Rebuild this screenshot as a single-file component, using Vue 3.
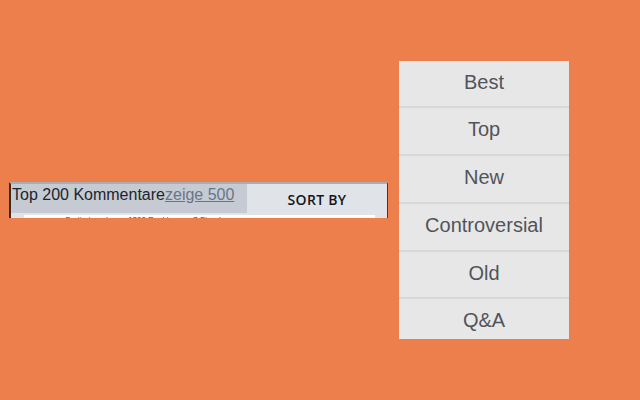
<script setup>
const sortOptions = ['Best', 'Top', 'New', 'Controversial', 'Old', 'Q&A']
</script>

<template>
  <div class="page">
    <div class="comments-bar">
      <div class="bar-head">
        <div class="title-box">
          <span class="title">Top 200 Kommentare</span><a class="show-more">zeige 500</a>
        </div>
        <div class="sort-label">SORT BY</div>
      </div>
      <div class="post-row">
        <p class="post-meta">Sortiert nach: am 1200 Punkten vor 7 Stunden</p>
      </div>
    </div>

    <ul class="sort-menu">
      <li v-for="option in sortOptions" :key="option" class="sort-item">{{ option }}</li>
    </ul>
  </div>
</template>

<style>
html,
body {
  margin: 0;
  background: #ec7f4b;
}
</style>

<style scoped>
.page {
  width: 640px;
  height: 400px;
  overflow: hidden;
  display: flex;
  align-items: center;
  padding-left: 9px;
  gap: 11px;
  box-sizing: border-box;
  background: #ec7f4b;
  font-family: "Liberation Sans", Arial, sans-serif;
}

.comments-bar {
  width: 379px;
  height: 36px;
  box-sizing: border-box;
  overflow: hidden;
  border-left: 2px solid #3a2c25;
  border-right: 1px solid #3a3a3a;
  border-top: 2px solid #a9aeb2;
  background: #e0e3e8;
  flex-shrink: 0;
}

.bar-head {
  display: flex;
  height: 31px;
}

.title-box {
  width: 236px;
  height: 29px;
  box-sizing: border-box;
  padding-left: 1px;
  background: #c6cbd3;
  font-size: 16px;
  line-height: 22px;
  white-space: nowrap;
}

.title {
  color: #20242c;
}

.show-more {
  color: #66768a;
  text-decoration: underline;
}

.sort-label {
  flex: 1;
  text-align: center;
  padding-top: 6px;
  font-family: "Open Sans", sans-serif;
  font-size: 14px;
  font-weight: 600;
  letter-spacing: 0.3px;
  line-height: 19px;
  color: #14161a;
}

.post-row {
  margin: 0 12px 0 13px;
  height: 20px;
  background: #ffffff;
}

.post-meta {
  margin: 0;
  padding: 0 0 0 41px;
  font-size: 8px;
  line-height: 9px;
  color: #333;
}

.sort-menu {
  width: 170px;
  margin: 0;
  padding: 0;
  list-style: none;
  flex-shrink: 0;
  background: #e8e7e7;
}

.sort-item {
  height: 47.8px;
  box-sizing: border-box;
  padding-top: 8px;
  border-bottom: 2px solid #d9d8d9;
  text-align: center;
  font-size: 20px;
  line-height: 26px;
  color: #50545c;
}

.sort-item:last-child {
  height: 40px;
  border-bottom: none;
}
</style>
